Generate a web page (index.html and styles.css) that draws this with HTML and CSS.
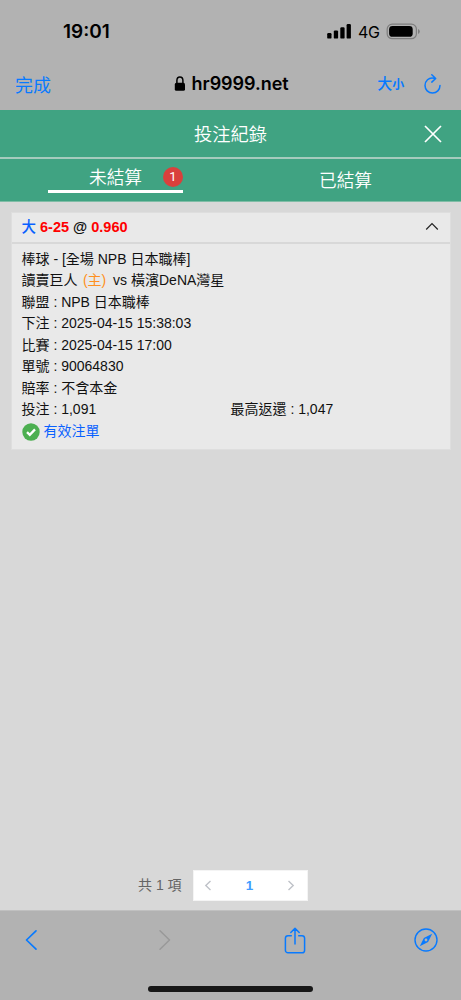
FILE: index.html
```html
<!DOCTYPE html>
<html lang="zh-Hant">
<head>
<meta charset="utf-8">
<meta name="viewport" content="width=device-width">
<title>投注紀錄</title>
<link rel="stylesheet" href="styles.css">
</head>
<body>
<div class="screen">
  <div class="status">
    <span class="time">19:01</span>
    <svg class="signal" width="25" height="16" viewBox="0 0 25 16"><rect x="0.2" y="10" width="4.3" height="5.6" rx="1.2"/><rect x="6.8" y="7.4" width="4.3" height="8.2" rx="1.2"/><rect x="13.3" y="4.2" width="4.3" height="11.4" rx="1.2"/><rect x="19.6" y="1" width="4.3" height="14.6" rx="1.2"/></svg>
    <span class="network">4G</span>
    <svg class="battery" width="35" height="17" viewBox="0 0 35 17"><rect x="1.2" y="1.1" width="29.2" height="14.6" rx="5" fill="none" stroke="#7d7d7d" stroke-width="1.2"/><rect x="3.1" y="3" width="23.6" height="10.8" rx="3.4"/><path d="M32 6v5q1.8-.7 1.8-2.5T32 6z" fill="#7d7d7d"/></svg>
  </div>
  <div class="addressbar">
    <span class="done">完成</span>
    <svg class="lock" width="12" height="16" viewBox="0 0 12 16"><rect x="0.8" y="6.8" width="10.2" height="8" rx="1.6"/><path d="M2.9 7.4V4.6a3 3.5 0 0 1 6 0v2.8" fill="none" stroke="#000" stroke-width="1.5"/></svg>
    <span class="host">hr9999.net</span>
    <span class="textsize">大<small>小</small></span>
    <svg class="reload" width="20" height="22" viewBox="0 0 20 22" fill="none" stroke="#087aff" stroke-width="1.5" stroke-linecap="round" stroke-linejoin="round"><path d="M11.5 5.4C5.5 3.7 2 8.3 2 12.6a7.5 7.5 0 0 0 15 0M8.8 1.8l3.9 3.7-3.9 3.6"/></svg>
  </div>
  <div class="titlebar">
    <h1>投注紀錄</h1>
    <svg class="close" width="18" height="18" viewBox="0 0 18 18"><path d="M1 1l16 16M17 1L1 17" stroke="#fff" stroke-width="1.7"/></svg>
  </div>
  <div class="tabs">
    <div class="tab tab-active"><span>未結算</span><b class="badge">1</b></div>
    <div class="tab"><span>已結算</span></div>
  </div>
  <main>
    <section class="card">
      <div class="card-head">
        <div class="pick"><span class="side">大</span> <span class="odds">6-25</span> @ <span class="odds">0.960</span></div>
        <svg width="14" height="9" viewBox="0 0 14 9"><path d="M1.2 7.5L7 1.7l5.8 5.8" fill="none" stroke="#222" stroke-width="1.2"/></svg>
      </div>
      <div class="card-body">
        <div>棒球 - [全場 NPB 日本職棒]</div>
        <div>讀賣巨人 <span class="home">(主)</span> vs 橫濱DeNA灣星</div>
        <div>聯盟 : NPB 日本職棒</div>
        <div>下注 : 2025-04-15 15:38:03</div>
        <div>比賽 : 2025-04-15 17:00</div>
        <div>單號 : 90064830</div>
        <div>賠率 : 不含本金</div>
        <div class="amounts"><span>投注 : 1,091</span><span>最高返還 : 1,047</span></div>
        <div class="valid"><svg width="18" height="18" viewBox="0 0 18 18"><circle cx="9" cy="9" r="8.7" fill="#4caf50"/><path d="M5 9.1l2.8 2.7L13 6.4" fill="none" stroke="#fff" stroke-width="2.3"/></svg><span>有效注單</span></div>
      </div>
    </section>
    <div class="pagination">
      <span class="total">共 1 項</span>
      <div class="pager">
        <svg width="8" height="11" viewBox="0 0 8 11"><path d="M6.5 1L1.8 5.5 6.5 10"/></svg>
        <b>1</b>
        <svg width="8" height="11" viewBox="0 0 8 11"><path d="M1.5 1l4.7 4.5L1.5 10"/></svg>
      </div>
    </div>
  </main>
  <footer>
    <div class="tools">
      <svg width="14" height="22" viewBox="0 0 14 22"><path d="M12 1.8L2.5 11l9.5 9.2" stroke="#087aff" stroke-width="1.7"/></svg>
      <svg width="14" height="22" viewBox="0 0 14 22"><path d="M2 1.8L11.5 11 2 20.2" stroke="#999" stroke-width="1.5"/></svg>
      <svg width="22" height="27" viewBox="0 0 22 27"><path d="M7.3 8.7H4a2.6 2.6 0 0 0-2.6 2.6v11.9A2.6 2.6 0 0 0 4 25.8h14a2.6 2.6 0 0 0 2.6-2.6V11.3A2.6 2.6 0 0 0 18 8.7h-3.3M11 17V1.4M6.8 5.5L11 1.3l4.2 4.2" stroke="#087aff" stroke-width="1.5"/></svg>
      <svg width="24" height="24" viewBox="0 0 24 24"><circle cx="12" cy="12" r="11" stroke="#087aff" stroke-width="1.4"/><path d="M18.2 5.8l-4.1 8.3-8.3 4.1 4.1-8.3z" fill="#087aff"/><circle cx="12" cy="12" r="1.4" fill="#b2b2b2"/></svg>
    </div>
    <div class="home-indicator"></div>
  </footer>
</div>
</body>
</html>
```
FILE: styles.css
```css
* { box-sizing: border-box; }
body { margin: 0; font-family: "Liberation Sans", "Noto Sans CJK TC", sans-serif; color: #111; }
svg { display: block; flex: none; }
.screen { width: 461px; height: 1000px; display: flex; flex-direction: column; background: #d8d8d8; overflow: hidden; white-space: nowrap; }
.status { height: 62px; background: #b2b2b2; display: flex; align-items: center; padding-left: 63px; color: #000; }
.time { width: 264px; font: 600 19px Inter, sans-serif; letter-spacing: 0; }
.network { margin-left: 6px; width: 24px; padding-top: 1px; font: 400 16px Inter, sans-serif; letter-spacing: -.4px; }
.battery { margin-left: 4px; }
.addressbar { height: 48px; background: #b2b2b2; display: flex; align-items: center; padding: 0 18px 4px 15px; color: #087aff; }
.done { width: 159px; font-size: 18px; padding-bottom: 1px; }
.lock { margin-top: -1px; }
.host { width: 186px; margin-left: 6px; padding-bottom: 1px; color: #000; font: 600 18px Inter, sans-serif; letter-spacing: -.05px; }
.textsize { width: 46px; font-size: 15px; font-weight: 500; line-height: 22px; }
.textsize small { font-size: 12px; font-weight: 700; }
.reload { margin-top: -1px; }
.titlebar { height: 47px; background: #40a382; display: flex; align-items: center; padding: 0 19px 0 37px; color: #fff; }
h1 { flex: 1; margin: 0; padding-bottom: 2px; text-align: center; font-size: 18.3px; font-weight: 350; }
.tabs { height: 45px; background: #40a382; border-top: 2px solid #a5cbbd; border-bottom: 1px solid #80bda6; display: grid; grid-template-columns: 230px 231px; color: #fff; font-size: 17.7px; font-weight: 350; }
.tab { display: flex; align-items: center; justify-content: center; padding-bottom: 2px; }
.tab-active { width: 135px; height: 34px; margin-left: 48px; border-bottom: 3px solid #fff; position: relative; padding: 2px 0 0; }
.badge { position: absolute; right: 0; top: 8px; width: 20px; height: 20px; border-radius: 50%; background: #d9403c; font: 400 13px/20px Roboto, sans-serif; text-align: center; }
main { height: 709px; flex: none; padding: 10px 10.5px 10px; display: flex; flex-direction: column; justify-content: space-between; }
.card { height: 238px; background: #e9e9e9; border: 1px solid #dedede; }
.card-head { height: 31px; padding: 0 11px 1px 10px; display: flex; align-items: center; justify-content: space-between; border-bottom: 2px solid #d8d8d8; }
.pick { padding-bottom: 3px; font-size: 14.5px; font-weight: 700; }
.card-head svg { margin-top: -1px; }
.side { color: #0961ff; font-weight: 500; }
.odds { color: #f00; }
.card-body { padding: 5px 10px; font-size: 14px; line-height: 21.5px; }
.card-body > div { height: 21.5px; }
.home { color: #ff9021; margin: 0 3px 0 1.5px; }
.amounts { display: grid; grid-template-columns: 209px 1fr; }
.card-body .valid { height: 22px; display: flex; align-items: center; gap: 4px; color: #0961ff; }
.pagination { display: flex; align-items: center; padding-left: 127.5px; height: 31px; }
.total { width: 55px; padding-bottom: 3px; color: #656565; font-size: 14px; }
.pager { width: 115px; height: 31px; background: #fff; border: 1px solid #f4f4f4; display: flex; align-items: center; justify-content: space-between; padding: 0 12px 1px 10px; }
.pager b { color: #409eff; font-size: 13.5px; }
.pager path { fill: none; stroke: #bfc2c8; stroke-width: 1.4; }
.card-body { margin-top: -.5px; }
footer { flex: 1; background: #b2b2b2; border-top: 1px solid #c0c0c0; margin-top: -1px; }
.tools { display: grid; grid-template-columns: 134px 125.5px 130.5px 24px; height: 58px; align-items: center; padding-left: 24px; }
.home-indicator { width: 165px; height: 6px; margin: 17px auto 0; border-radius: 3px; background: #171717; }
.tools svg { fill: none; stroke-linecap: round; stroke-linejoin: round; }
```
